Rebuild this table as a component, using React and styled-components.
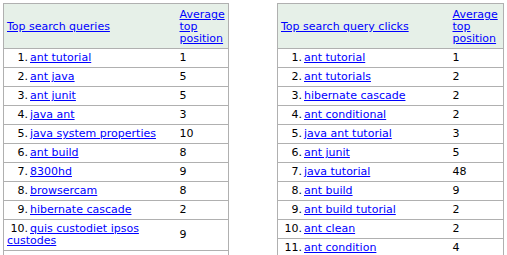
import React from 'react';
import styled, { createGlobalStyle } from 'styled-components';

const GlobalStyle = createGlobalStyle`
  html, body {
    margin: 0;
    padding: 0;
    background: #ffffff;
    overflow: hidden;
  }
  body {
    font-family: 'DejaVu Sans', Verdana, sans-serif;
    font-size: 11px;
    color: #000000;
  }
`;

const Page = styled.div`
  display: flex;
  align-items: flex-start;
  gap: 48px;
  padding: 3px 0 0 3px;
  width: 507px;
  height: 255px;
  box-sizing: border-box;
`;

const Table = styled.table`
  border-collapse: collapse;
  border: 1px solid #b0b0b0;
  width: ${props => props.width}px;
  table-layout: fixed;
`;

const HeadCell = styled.th`
  background: #e6f0e8;
  font-weight: normal;
  text-align: left;
  vertical-align: middle;
  line-height: 12px;
  padding: 5px 3px 3px;
  border-bottom: 1px solid #b0b0b0;
`;

const Cell = styled.td`
  line-height: 12px;
  padding: 3px 3px;
  border-bottom: 1px solid #b0b0b0;
  vertical-align: middle;
`;

const Rank = styled.span`
  display: inline-block;
  width: 21px;
  text-align: right;
  margin-right: 2px;
`;

const Link = styled.a`
  color: #0000ff;
  text-decoration: underline;
`;

const queries = [
  ['ant tutorial', 1],
  ['ant java', 5],
  ['ant junit', 5],
  ['java ant', 3],
  ['java system properties', 10],
  ['ant build', 8],
  ['8300hd', 9],
  ['browsercam', 8],
  ['hibernate cascade', 2],
  ['quis custodiet ipsos custodes', 9],
  ['ant tasks', 4],
];

const clicks = [
  ['ant tutorial', 1],
  ['ant tutorials', 2],
  ['hibernate cascade', 2],
  ['ant conditional', 2],
  ['java ant tutorial', 3],
  ['ant junit', 5],
  ['java tutorial', 48],
  ['ant build', 9],
  ['ant build tutorial', 2],
  ['ant clean', 2],
  ['ant condition', 4],
  ['ant if', 3],
];

function QueryTable({ title, rows, width, posWidth }) {
  return (
    <Table width={width}>
      <colgroup>
        <col />
        <col style={{ width: posWidth }} />
      </colgroup>
      <thead>
        <tr>
          <HeadCell>
            <Link href="#">{title}</Link>
          </HeadCell>
          <HeadCell>
            <Link href="#">Average top position</Link>
          </HeadCell>
        </tr>
      </thead>
      <tbody>
        {rows.map(([text, pos], i) => (
          <tr key={text + i}>
            <Cell>
              <Rank>{i + 1}.</Rank>
              <Link href="#">{text}</Link>
            </Cell>
            <Cell>{pos}</Cell>
          </tr>
        ))}
      </tbody>
    </Table>
  );
}

export default function App() {
  return (
    <Page>
      <GlobalStyle />
      <QueryTable
        title="Top search queries"
        rows={queries}
        width={226}
        posWidth={52}
      />
      <QueryTable
        title="Top search query clicks"
        rows={clicks}
        width={227}
        posWidth={54}
      />
    </Page>
  );
}
